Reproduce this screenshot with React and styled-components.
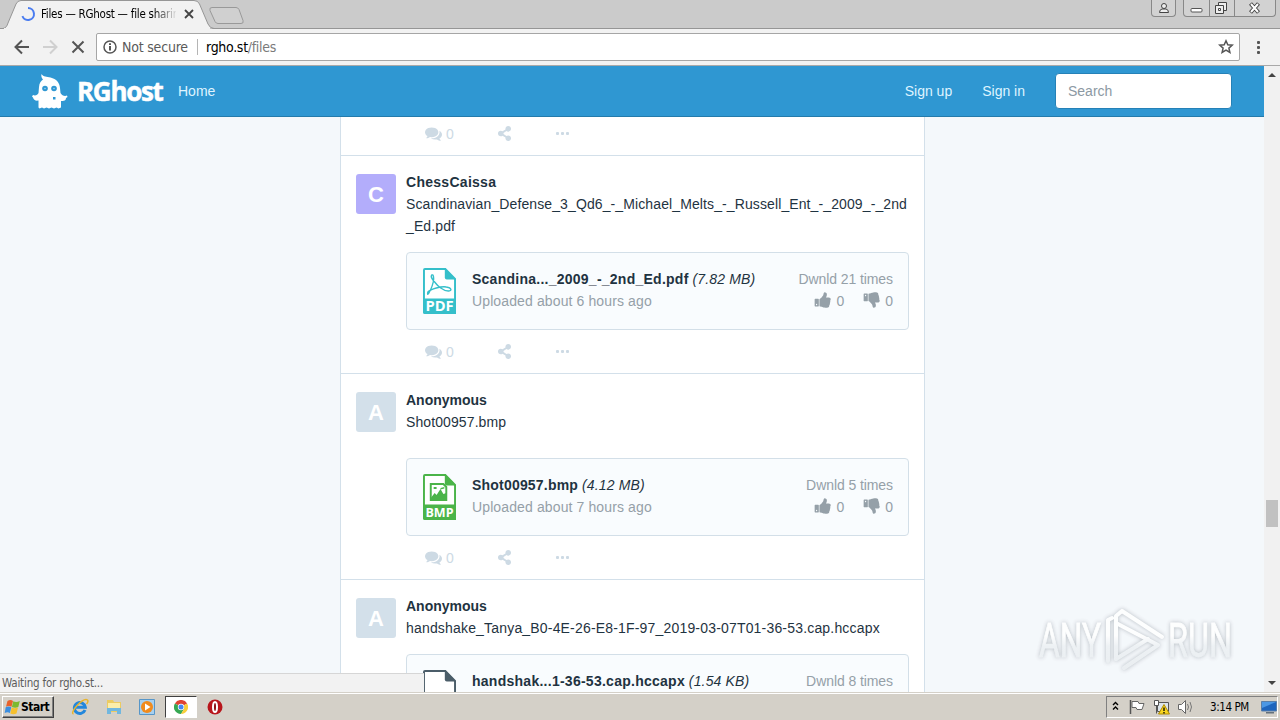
import React from "react";
import styled, { createGlobalStyle } from "styled-components";
import { FaShareAlt } from "react-icons/fa";

const posts = [
  {
    user: "ChessCaissa",
    userSpacing: "0.28px",
    letter: "C",
    color: "#b3adfb",
    title: ["Scandinavian_Defense_3_Qd6_-_Michael_Melts_-_Russell_Ent_-_2009_-_2nd", "_Ed.pdf"],
    titleSpacing: "0.11px",
    file: "Scandina..._2009_-_2nd_Ed.pdf",
    fileSpacing: "0.25px",
    size: "(7.82 MB)",
    ago: "Uploaded about 6 hours ago",
    times: "Dwnld 21 times",
    type: "pdf",
    gap: 15,
  },
  {
    user: "Anonymous",
    userSpacing: "0",
    letter: "A",
    color: "#d3e0ea",
    title: ["Shot00957.bmp"],
    titleSpacing: "0.1px",
    file: "Shot00957.bmp",
    fileSpacing: "0.2px",
    size: "(4.12 MB)",
    ago: "Uploaded about 7 hours ago",
    times: "Dwnld 5 times",
    type: "bmp",
    gap: 25,
  },
  {
    user: "Anonymous",
    userSpacing: "0",
    letter: "A",
    color: "#d3e0ea",
    title: ["handshake_Tanya_B0-4E-26-E8-1F-97_2019-03-07T01-36-53.cap.hccapx"],
    titleSpacing: "0.18px",
    file: "handshak...1-36-53.cap.hccapx",
    fileSpacing: "0.26px",
    size: "(1.54 KB)",
    times: "Dwnld 8 times",
    type: "file",
    gap: 15,
  },
];

const GhostIcon = () => (
  <svg width="36" height="36" viewBox="0 0 36 36">
    <path
      fill="#fff"
      d="M9.500 1c2 3 5 2.500 9 3.500 6 1.500 9 5 9.500 10.500l.5 5c1.500 2.500 4 3.500 6.500 2.500l.5 1.500-1.500 1c0 2-1.500 3.500-5 3v6.500l-2.500 1-2-1-2.500 1-2.500-1-2.500 1-2.500-1-2.500 1-2-1-2.500 1-1-1v-7c-3 .5-5-.5-5.500-3L0 23.500 1 22c2.500 1 4.500 0 5.500-2l.5-6c.3-4 2-6 4-7.500-1.500-1.500-2-3.500-1.500-5.500z"
    />
    <circle cx="13" cy="15.500" r="2.800" fill="#2f97d2" />
    <circle cx="22" cy="15.500" r="2.800" fill="#2f97d2" />
    <circle cx="13" cy="15.500" r="0.800" fill="#9fd0ee" />
    <circle cx="22" cy="15.500" r="0.800" fill="#9fd0ee" />
    <path d="M21 24h2.500v2.500H21z" fill="#2f97d2" />
  </svg>
);

const CommentsIcon = () => (
  <svg width="17" height="17" viewBox="0 0 1792 1792" fill="currentColor">
    <path d="M1408 768q0 139-94 257t-256.500 186.500-353.500 68.500q-86 0-176-16-124 88-278 128-36 9-86 16h-3q-11 0-20.500-8t-11.500-21q-1-3-1-6.500t.5-6.500 2-6l2.500-5 3.500-5.500 4-5 4.500-5 4-4.500q5-6 23-25t26-29.500 22.500-29 25-38.500 20.500-44q-124-72-195-177t-71-224q0-139 94-257t256.500-186.500 353.500-68.500 353.500 68.500 256.500 186.500 94 257zm384 256q0 120-71 224.500t-195 176.500q10 24 20.500 44t25 38.500 22.500 29 26 29.500 23 25q1 1 4 4.500t4.500 5 4 5 3.500 5.500l2.500 5 2 6 .5 6.500-1 6.500q-3 14-13 22t-22 7q-50-7-86-16-154-40-278-128-90 16-176 16-271 0-472-132 58 4 88 4 161 0 309-45t264-129q125-92 192-212t67-254q0-77-23-152 129 71 204 178t75 230z" />
  </svg>
);

const ThumbIcon = ({ down }) => (
  <svg width="18" height="18" viewBox="0 0 1792 1792" fill="currentColor">
    <path
      transform={down ? "matrix(1 0 0 -1 0 1792)" : undefined}
      d="M320 1344q0-26-19-45t-45-19q-27 0-45.500 19t-18.500 45q0 27 18.500 45.500t45.500 18.500q26 0 45-18.500t19-45.500zm160-512v640q0 26-19 45t-45 19h-288q-26 0-45-19t-19-45v-640q0-26 19-45t45-19h288q26 0 45 19t19 45zm1184 0q0 86-55 149 15 44 15 76 3 76-43 137 17 56 0 117-15 57-54 94 9 112-49 181-64 76-197 78h-129q-66 0-144-15.500t-121.500-29-120.500-39.500q-123-43-158-44-26-1-45-19.500t-19-44.500v-641q0-25 18-43.500t43-20.500q24-2 76-59t101-121q68-87 101-120 18-18 31-48t17.500-48.500 13.500-60.500q7-39 12.500-61t19.500-52 34-50q19-19 45-19 46 0 82.500 10.500t60 26 40 40.500 24 45 12 50 5 45 .5 39q0 38-9.500 76t-19 60-27.500 56q-3 6-10 18t-11 22-8 24h277q78 0 135 57t57 135z"
    />
  </svg>
);

const FileIcon = ({ type }) => {
  const color = { pdf: "#35bfca", bmp: "#4bb449", file: "#4b5d69" }[type];
  return (
    <svg width="33" height="46" viewBox="0 0 34 46" preserveAspectRatio="none">
      <path d="M2 1h21l10 10v34H2a1 1 0 0 1-1-1V2a1 1 0 0 1 1-1z" fill="#fff" stroke={color} strokeWidth="2" />
      <path d="M22.500 0L34 11.500H24.500a2 2 0 0 1-2-2z" fill={color} />
      {type !== "file" && <path d="M0 30.500h34V44a2 2 0 0 1-2 2H2a2 2 0 0 1-2-2z" fill={color} />}
      {type === "pdf" && (
        <path
          d="M9 7q2-1 2 4c0 4-3 11-5 14q-2 3-1-1c3-3 14-6 19-5 6 1 6 4 2 4-5 0-11-5-14-9-3-3-4-6-3-7z"
          fill="none"
          stroke={color}
          strokeWidth="1.400"
        />
      )}
      {type === "bmp" && (
        <>
          <path d="M8 10h13l3 3v13H8z" fill="none" stroke={color} strokeWidth="2" />
          <path d="M8 24l4-5 2 2 4-6 3 5 3-1v7H8z" fill={color} />
          <path d="M11 13h3v2h-3zM18 14l4-1v1.500l-4 1z" fill={color} />
        </>
      )}
      {type !== "file" && (
        <text
          x="2.500"
          y="43.500"
          fill="#fff"
          fontFamily="Open Sans, sans-serif"
          fontWeight="700"
          fontSize={type === "pdf" ? 15 : 13}
          textLength="29"
          lengthAdjust="spacingAndGlyphs"
        >
          {type.toUpperCase()}
        </text>
      )}
    </svg>
  );
};

const Spinner = () => (
  <svg width="16" height="16" viewBox="0 0 16 16">
    <path d="M8 2a6 6 0 1 1-5.600 8.200" fill="none" stroke="#4a7cf0" strokeWidth="2" />
  </svg>
);

const Watermark = () => (
  <WatermarkSvg width="224" height="72" viewBox="0 0 224 72">
    <defs>
      <linearGradient id="fade" x1="0" y1="0" x2="0" y2="72" gradientUnits="userSpaceOnUse">
        <stop offset="0.45" stopColor="#fff" />
        <stop offset="0.6" stopColor="#edf1f4" />
        <stop offset="1" stopColor="#e9edf0" />
      </linearGradient>
    </defs>
    <g fill="url(#fade)" stroke="url(#fade)" strokeWidth="0.800" fontFamily="Roboto, sans-serif" fontSize="49">
      <text x="5" y="54" textLength="62" lengthAdjust="spacingAndGlyphs">ANY</text>
      <text x="134" y="54" textLength="64" lengthAdjust="spacingAndGlyphs">RUN</text>
    </g>
    <g fill="none" stroke="url(#fade)" strokeWidth="4" strokeLinejoin="round" strokeLinecap="round">
      <path d="M74 58V17l4-2M82 56V13l6-5 40 26" />
      <path d="M82 20l42 22-34 23" />
      <path d="M82 56l32-20" />
    </g>
  </WatermarkSvg>
);

const PostFooter = () => (
  <Actions>
    <Comments>
      <CommentsIcon />
      <span>0</span>
    </Comments>
    <FaShareAlt size={15} />
    <Dots>
      <i />
      <i />
      <i />
    </Dots>
  </Actions>
);

const Post = ({ post }) => (
  <PostRow>
    <PostMain>
      <Avatar $color={post.color}>{post.letter}</Avatar>
      <PostBody>
        <UserName $spacing={post.userSpacing}>{post.user}</UserName>
        {post.title.map((line) => (
          <Title key={line} $spacing={post.titleSpacing}>
            {line}
          </Title>
        ))}
        <FileCard $gap={post.gap}>
          <FileIcon type={post.type} />
          <FileInfo>
            <FileName $spacing={post.fileSpacing}>
              <b>{post.file}</b> <i>{post.size}</i>
            </FileName>
            {post.ago && <Muted>{post.ago}</Muted>}
          </FileInfo>
          <Stats>
            <Downloads>{post.times}</Downloads>
            {post.ago && (
              <Votes>
                <ThumbIcon />
                <span>0</span>
                <ThumbIcon down />
                <span>0</span>
              </Votes>
            )}
          </Stats>
        </FileCard>
      </PostBody>
    </PostMain>
    {post.ago && <PostFooter />}
  </PostRow>
);

const TabStrip = () => (
  <Strip>
    <TabShape width="250" height="29" viewBox="0 0 250 29">
      <path d="M0 28.500H3C6 28 7 26 8 23L16 4Q17.500 .5 21 .5H194Q198 .5 199.500 4L208 24Q210 28.500 214 28.500" fill="#f2f2f2" stroke="#969696" />
      <path d="M4 28.500h206" stroke="#f2f2f2" />
      <path d="M212 7.500h24q2 0 3 2l4 11q1 3-2 3h-23q-2 0-3-2l-5-11q-1-3 2-3z" fill="#d0d0d0" stroke="#999" />
    </TabShape>
    <Tab>
      <Spinner />
      <TabTitle>Files — RGhost — file sharing</TabTitle>
      <svg width="10" height="10" viewBox="0 0 10 10">
        <path d="M1 1l8 8M9 1l-8 8" stroke="#444" strokeWidth="1.800" />
      </svg>
    </Tab>
    <WindowButtons>
      <UserButton>
        <svg width="12" height="14" viewBox="0 0 12 14">
          <circle cx="6" cy="4" r="2.500" fill="#eee" stroke="#444" />
          <path d="M4 7h4q2.500.5 2.500 3.500h-9Q1.500 7.500 4 7z" fill="#eee" stroke="#444" />
        </svg>
      </UserButton>
      <ButtonGroup>
        <svg width="92" height="17" viewBox="0 0 92 17">
          <path d="M25.500 0v16M50.500 0v16" stroke="#888" />
          <rect x="7" y="8.500" width="11" height="3.500" rx="1" fill="#fff" stroke="#555" />
          <path d="M34.500 2.500h8v8h-8z" fill="#eee" stroke="#444" />
          <path d="M31.500 5.500h8v8h-8z" fill="#eee" stroke="#444" />
          <path d="M34.500 8.500h2v2h-2z" fill="#fff" stroke="#444" />
          <path d="M66.500 3.500l8 9M74.500 3.500l-8 9" stroke="#444" strokeWidth="4" />
          <path d="M67 4l7 8M74 4l-7 8" stroke="#fff" strokeWidth="2" />
        </svg>
      </ButtonGroup>
    </WindowButtons>
  </Strip>
);

const Toolbar = () => (
  <ToolbarRow>
    <svg width="96" height="36" viewBox="0 0 96 36" fill="none" strokeWidth="2">
      <path d="M29 18H16M22 11.500L15.500 18l6.500 6.500" stroke="#555" />
      <path d="M43 18h13M50 11.500l6.500 6.500-6.500 6.500" stroke="#d0d0d0" />
      <path d="M72.500 12.500l11 11M83.500 12.500l-11 11" stroke="#555" />
    </svg>
    <AddressBar>
      <svg width="14" height="14" viewBox="0 0 14 14">
        <circle cx="7" cy="7" r="6" fill="none" stroke="#555" strokeWidth="1.500" />
        <path d="M6 6h2v4.500H6zM6 3.200h2v1.700H6z" fill="#555" />
      </svg>
      <NotSecure>Not secure</NotSecure>
      <Url>
        rgho.st<span>/files</span>
      </Url>
      <svg width="16" height="16" viewBox="0 0 16 16">
        <path d="M8 1.800l1.800 4 4.400.4-3.300 2.900 1 4.400L8 11.200l-3.900 2.300 1-4.400L1.800 6.200l4.400-.4z" fill="none" stroke="#555" strokeWidth="1.500" />
      </svg>
    </AddressBar>
    <MenuDots>
      <i />
      <i />
      <i />
    </MenuDots>
  </ToolbarRow>
);

const Taskbar = () => (
  <TaskbarRow>
    <StartButton>
      <svg width="17" height="16" viewBox="0 0 16 16">
        <path d="M3 2q3-2 5.500 0L7 7.800Q4 6 1.500 7.800z" fill="#e8622c" />
        <path d="M8.800 2.300q3 1.500 6.500-.3L13.800 8q-3 1.500-6.400 0z" fill="#7db92f" />
        <path d="M1.200 8.300q3-1.500 5.600 0L5.400 14q-2.500-1.500-5.200 0z" fill="#3b8ee0" />
        <path d="M7.200 8.600q3 1.500 6.300 0L12 14.500q-3 1.500-6.200 0z" fill="#f6c02e" />
      </svg>
      Start
    </StartButton>
    <QuickIcon>
      <svg width="18" height="18" viewBox="0 0 18 18">
        <path d="M14 12A5.500 5.500 0 1 1 14.300 9.200H5" fill="none" stroke="#2387dc" strokeWidth="3" />
        <path d="M2.500 16C-2 15 12-1 16.500 2c1 1 0 3-1 4" fill="none" stroke="#e9b42b" strokeWidth="1.500" />
      </svg>
    </QuickIcon>
    <QuickIcon>
      <svg width="18" height="18" viewBox="0 0 18 18">
        <path d="M2 2h6l1 2h7v10H2z" fill="#eccb62" />
        <path d="M3 5h12v6H3z" fill="#fbedaa" />
        <path d="M2 10h14v6h-4v-3H6v3H2z" fill="#71b7df" />
      </svg>
    </QuickIcon>
    <QuickIcon>
      <svg width="18" height="18" viewBox="0 0 18 18">
        <path d="M1.500 1.500h15v15h-15z" fill="#a7d0ef" stroke="#5796c8" />
        <circle cx="9" cy="9" r="6" fill="#f18b1d" />
        <path d="M7 5.500v7L12.500 9z" fill="#fff" />
      </svg>
    </QuickIcon>
    <QuickIcon $active>
      <svg width="14" height="14" viewBox="0 0 14 14">
        <path d="M7 7L.9 3.500A7 7 0 0 1 13.100 3.500z" fill="#df4332" />
        <path d="M7 7L.9 3.500A7 7 0 0 0 7 14l3-5z" fill="#36a853" />
        <path d="M7 7l6.100-3.500A7 7 0 0 1 7 14l3-5z" fill="#f8ce3a" />
        <circle cx="7" cy="7" r="3.200" fill="#fff" />
        <circle cx="7" cy="7" r="2.500" fill="#4587f3" />
      </svg>
    </QuickIcon>
    <QuickIcon>
      <svg width="16" height="16" viewBox="0 0 16 16">
        <circle cx="8" cy="8" r="7.500" fill="#b8151b" />
        <ellipse cx="8" cy="8" rx="2" ry="5" fill="#8c1014" stroke="#fff" strokeWidth="2" />
      </svg>
    </QuickIcon>
    <Tray>
      <svg width="92" height="20" viewBox="0 0 92 20">
        <path d="M6 8l2.500-2.500L11 8M6 12.500L8.500 10l2.500 2.500" fill="none" stroke="#000" strokeWidth="1.400" />
        <path d="M23.500 3v14" stroke="#555" strokeWidth="1.500" />
        <path d="M25 4.500h6l1 2h5l-2 6h-5l-1-2h-4z" fill="#fff" stroke="#666" />
        <path d="M50.500 5.500h11v9h-11z" fill="#dce4ea" stroke="#555" />
        <path d="M47.500 3.500h4v5h-4zM49.500 8.500v8" fill="#fff" stroke="#555" />
        <path d="M57 7.500l5.500 9.500h-11z" fill="#f9d61f" stroke="#b18c00" />
        <path d="M57 10.500v3.500M57 15v1.500" stroke="#000" strokeWidth="1.300" />
        <path d="M71.500 7.500h3l4-4v13l-4-4h-3z" fill="#fff" stroke="#666" />
        <path d="M80.500 7q2 3 0 6M83 5q3 5 0 10" fill="none" stroke="#777" />
      </svg>
      <Clock>3:14 PM</Clock>
      <svg width="16" height="14" viewBox="0 0 16 14">
        <path d="M.5 1.500h15v9.500H.5z" fill="#1e65bd" stroke="#5a7fa8" />
        <path d="M1 2h14L1 8z" fill="#4b97e4" />
        <path d="M5 12h8v1.500H5z" fill="#63707c" />
      </svg>
    </Tray>
  </TaskbarRow>
);

const App = () => {
  return (
    <Screen>
      <GlobalStyle />
      <TabStrip />
      <Toolbar />
      <Viewport>
        <Page>
          <Navbar>
            <GhostIcon />
            <Brand>RGhost</Brand>
            <NavLink>Home</NavLink>
            <NavRight>
              <NavLink>Sign up</NavLink>
              <NavLink>Sign in</NavLink>
              <Search placeholder="Search" />
            </NavRight>
          </Navbar>
          <Feed>
            <PreviousPost>
              <PostFooter />
            </PreviousPost>
            {posts.map((post) => (
              <Post key={post.file} post={post} />
            ))}
          </Feed>
        </Page>
        <Scrollbar>
          <Arrow $up />
          <Thumb />
          <Arrow />
        </Scrollbar>
        <Watermark />
        <StatusBubble>Waiting for rgho.st...</StatusBubble>
      </Viewport>
      <Taskbar />
    </Screen>
  );
};

export default App;

const GlobalStyle = createGlobalStyle`
  * {
    box-sizing: border-box;
  }
  body {
    margin: 0;
    overflow: hidden;
  }
  svg {
    display: block;
    flex-shrink: 0;
  }
`;

const Screen = styled.div`
  width: 1280px;
  height: 720px;
  display: flex;
  flex-direction: column;
  overflow: hidden;
  font-family: "Liberation Sans", Arial, sans-serif;
  font-size: 14px;
  color: #1f3341;
`;

const Strip = styled.div`
  position: relative;
  flex: 0 0 29px;
  display: flex;
  justify-content: space-between;
  background: #cbcbcb;
  border-bottom: 1px solid #969696;
`;

/* the tab outline lies behind the tab's own content */
const TabShape = styled.svg`
  position: absolute;
  left: 0;
  top: 0;
`;

const Tab = styled.div`
  position: relative;
  display: flex;
  align-items: center;
  width: 206px;
  height: 28px;
  padding-left: 20px;
`;

const TabTitle = styled.div`
  width: 135px;
  margin: 0 8px 0 5px;
  overflow: hidden;
  white-space: nowrap;
  font-family: "DejaVu Sans Condensed", "DejaVu Sans", sans-serif;
  font-stretch: condensed;
  font-size: 11.5px;
  letter-spacing: -0.25px;
  color: #000;
  mask-image: linear-gradient(to right, #000 112px, transparent 137px);
`;

const WindowButtons = styled.div`
  display: flex;
  gap: 7px;
  padding-right: 4px;
`;

const UserButton = styled.div`
  display: flex;
  justify-content: center;
  width: 25px;
  height: 17px;
  border: 1px solid #888;
  border-top: none;
  border-radius: 0 0 4px 4px;
  background: #d2d2d2;
  padding-top: 2px;
`;

const ButtonGroup = styled.div`
  width: 93px;
  height: 17px;
  border: 1px solid #888;
  border-top: none;
  border-radius: 0 0 4px 4px;
  background: #d2d2d2;
  overflow: hidden;
`;

const ToolbarRow = styled.div`
  flex: 0 0 37px;
  display: flex;
  align-items: center;
  background: #f2f2f2;
  border-bottom: 1px solid #a9a9a9;
`;

const AddressBar = styled.div`
  display: flex;
  align-items: center;
  width: 1144px;
  height: 28px;
  padding: 0 5px 0 6px;
  background: #fff;
  border: 1px solid #a6a6a6;
  border-radius: 2px;
  font-family: "DejaVu Sans Condensed", "DejaVu Sans", sans-serif;
  font-stretch: condensed;
  font-size: 14px;
`;

const NotSecure = styled.span`
  margin-left: 5px;
  width: 76px;
  white-space: nowrap;
  border-right: 1px solid #b5b5b5;
  letter-spacing: -0.2px;
  color: #5a5a5a;
`;

const Url = styled.span`
  flex: 1;
  margin-left: 8px;
  color: #000;
  letter-spacing: -0.3px;

  span {
    color: #7a7a7a;
  }
`;

const MenuDots = styled.div`
  display: flex;
  flex-direction: column;
  gap: 2px;
  margin-left: 17px;

  i {
    width: 3px;
    height: 3px;
    border-radius: 1px;
    background: #555;
  }
`;

const Viewport = styled.div`
  position: relative;
  flex: 0 0 626px;
  display: flex;
  overflow: hidden;
`;

const Page = styled.div`
  width: 1264px;
  display: flex;
  flex-direction: column;
  background: #f4f8fb;
`;

const Navbar = styled.div`
  flex: 0 0 51px;
  width: 100%;
  display: flex;
  align-items: center;
  padding: 0 32px;
  background: #2f97d2;
  border-bottom: 1px solid #247bab;
`;

const Brand = styled.div`
  width: 110px;
  padding-left: 9px;
  font-family: "Open Sans", sans-serif;
  font-weight: 700;
  font-size: 26px;
  line-height: 32px;
  letter-spacing: -1.3px;
  color: #fff;
  -webkit-text-stroke: 0.5px #fff;
`;

const NavLink = styled.a`
  color: #dff4ff;
`;

const NavRight = styled.div`
  display: flex;
  align-items: center;
  gap: 30px;
  margin-left: auto;
`;

const Search = styled.input`
  width: 177px;
  height: 36px;
  padding: 0 12px;
  border: 1px solid #2581b7;
  border-radius: 4px;
  background: #fff;
  font: inherit;

  &::placeholder {
    color: #8c99a3;
  }
`;

const Feed = styled.div`
  width: 585px;
  flex: 1;
  min-height: 0;
  margin-left: 340px;
  overflow: hidden;
  background: #fff;
  border-left: 1px solid #d3e0ea;
  border-right: 1px solid #d3e0ea;
`;

const PreviousPost = styled.div`
  height: 39px;
  display: flex;
  align-items: flex-end;
  border-bottom: 1px solid #d3e0ea;
`;

const PostRow = styled.div`
  padding-top: 15px;
  border-bottom: 1px solid #d3e0ea;
`;

const PostMain = styled.div`
  display: flex;
  gap: 10px;
  padding: 0 15px;
`;

const Avatar = styled.div`
  flex: 0 0 40px;
  height: 40px;
  margin-top: 3px;
  border-radius: 3px;
  background: ${(props) => props.$color};
  color: #fff;
  font-size: 22px;
  font-weight: 700;
  line-height: 42px;
  text-align: center;
`;

const PostBody = styled.div`
  flex: 1;
  min-width: 0;
  line-height: 22px;
`;

const UserName = styled.div`
  font-weight: 700;
  letter-spacing: ${(props) => props.$spacing};
`;

const Title = styled.div`
  white-space: nowrap;
  letter-spacing: ${(props) => props.$spacing};
`;

const FileCard = styled.div`
  display: flex;
  height: 78px;
  margin-top: ${(props) => props.$gap}px;
  padding: 15px 15px 15px 16px;
  background: #f9fcfe;
  border: 1px solid #d3dfe8;
  border-radius: 4px;
`;

const FileInfo = styled.div`
  flex: 1;
  margin-left: 16px;
  white-space: nowrap;
`;

const FileName = styled.div`
  b {
    letter-spacing: ${(props) => props.$spacing};
  }
  i {
    letter-spacing: 0.15px;
  }
`;

const Muted = styled.div`
  color: #95a0a8;
  letter-spacing: 0.12px;
`;

const Downloads = styled(Muted)`
  letter-spacing: -0.08px;
`;

const Stats = styled.div`
  display: flex;
  flex-direction: column;
  align-items: flex-end;
`;

const Votes = styled.div`
  display: flex;
  align-items: center;
  color: #95a0a8;

  svg {
    margin: -2px 4px 0 19px;
  }
`;

const Actions = styled.div`
  display: flex;
  align-items: center;
  height: 43px;
  padding-left: 84px;
  color: #cddae4;
`;

const Comments = styled.div`
  display: flex;
  align-items: center;
  gap: 4px;
  width: 72px;
`;

const Dots = styled.div`
  display: flex;
  gap: 2px;
  margin-left: 44px;

  i {
    width: 3px;
    height: 3px;
    border-radius: 1px;
    background: currentColor;
  }
`;

const Scrollbar = styled.div`
  width: 16px;
  display: flex;
  flex-direction: column;
  align-items: center;
  padding: 7px 0;
  background: #f1f1f1;
`;

const Arrow = styled.div`
  width: 0;
  height: 0;
  border: 4px solid transparent;
  border-${(props) => (props.$up ? "top" : "bottom")}-width: 0;
  border-${(props) => (props.$up ? "bottom" : "top")}-color: #444;
`;

const Thumb = styled.div`
  width: 12px;
  height: 27px;
  margin: 423px 0 auto;
  background: #c1c1c1;
`;

const WatermarkSvg = styled.svg`
  position: absolute;
  left: 1034px;
  top: 537px;
  opacity: 0.9;
  filter: drop-shadow(0 0 2px rgba(90, 100, 110, 0.45));
`;

const StatusBubble = styled.div`
  position: absolute;
  left: 0;
  bottom: 0;
  width: 424px;
  height: 19px;
  padding-left: 2px;
  line-height: 19px;
  background: #f2f2f2;
  border-top: 1px solid #d6d6d6;
  font-family: "DejaVu Sans Condensed", "DejaVu Sans", sans-serif;
  font-stretch: condensed;
  font-size: 11.5px;
  letter-spacing: -0.2px;
  color: #5c5c5c;
`;

const TaskbarRow = styled.div`
  flex: 0 0 28px;
  display: flex;
  align-items: center;
  padding: 2px 2px 0;
  background: #d4d0c8;
  box-shadow: inset 0 1px #d4d0c8, inset 0 2px #fff;
  color: #000;
`;

const StartButton = styled.div`
  display: flex;
  align-items: center;
  width: 52px;
  height: 22px;
  margin-right: 10px;
  padding-left: 1px;
  border: 1px solid;
  border-color: #fff #404040 #404040 #fff;
  box-shadow: inset -1px -1px #808080;
  font-family: "DejaVu Sans Condensed", "DejaVu Sans", sans-serif;
  font-stretch: condensed;
  font-weight: 700;
  font-size: 12px;
  letter-spacing: -0.5px;
`;

const QuickIcon = styled.div`
  display: flex;
  align-items: center;
  justify-content: center;
  width: 32px;
  height: 22px;
  margin-right: ${(props) => (props.$active ? "2px" : "1.5px")};
  background: ${(props) => (props.$active ? "#fff" : "none")};
  border: 1px solid;
  border-color: ${(props) => (props.$active ? "#404040 #fff #fff #404040" : "transparent")};
`;

const Tray = styled.div`
  display: flex;
  align-items: center;
  width: 172px;
  height: 22px;
  margin-left: auto;
  border: 1px solid;
  border-color: #808080 #fff #fff #808080;
`;

const Clock = styled.div`
  width: 51px;
  margin-left: 11px;
  white-space: nowrap;
  font-family: "DejaVu Sans Condensed", "DejaVu Sans", sans-serif;
  font-stretch: condensed;
  font-size: 11.5px;
  letter-spacing: -0.4px;
`;
